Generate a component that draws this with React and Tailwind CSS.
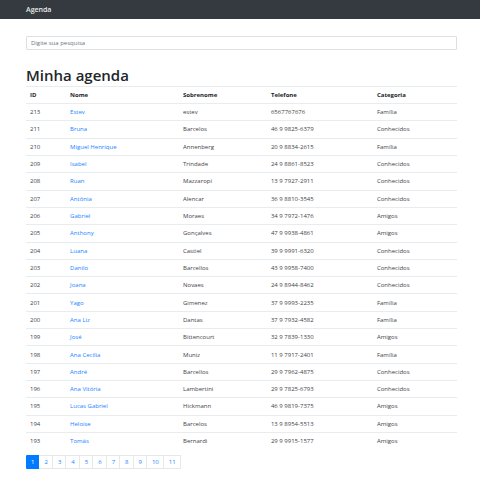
const contacts = [
  [213, "Estev", "estev", "6567767676", "Família"],
  [211, "Bruna", "Barcelos", "46 9 9825-6379", "Conhecidos"],
  [210, "Miguel Henrique", "Annenberg", "20 9 8834-2615", "Família"],
  [209, "Isabel", "Trindade", "24 9 8861-8523", "Conhecidos"],
  [208, "Ruan", "Mazzaropi", "13 9 7927-2911", "Conhecidos"],
  [207, "Antônia", "Alencar", "36 9 8810-3545", "Conhecidos"],
  [206, "Gabriel", "Moraes", "34 9 7972-1476", "Amigos"],
  [205, "Anthony", "Gonçalves", "47 9 9938-4861", "Amigos"],
  [204, "Luana", "Castiel", "39 9 9991-6320", "Conhecidos"],
  [203, "Danilo", "Barcellos", "43 9 9958-7400", "Conhecidos"],
  [202, "Joana", "Novaes", "24 9 8944-8462", "Conhecidos"],
  [201, "Yago", "Gimenez", "37 9 9993-2235", "Família"],
  [200, "Ana Liz", "Dantas", "37 9 7932-4582", "Família"],
  [199, "José", "Bittencourt", "32 9 7839-1330", "Amigos"],
  [198, "Ana Cecília", "Muniz", "11 9 7917-2401", "Família"],
  [197, "André", "Barcellos", "29 9 7962-4875", "Conhecidos"],
  [196, "Ana Vitória", "Lambertini", "29 9 7825-6793", "Conhecidos"],
  [195, "Lucas Gabriel", "Hickmann", "46 9 9819-7375", "Amigos"],
  [194, "Heloise", "Barcelos", "13 9 8954-5513", "Amigos"],
  [193, "Tomás", "Bernardi", "29 9 9915-1577", "Amigos"],
];

const columns = [
  ["ID", "w-[9.3%]"],
  ["Nome", "w-[26.2%]"],
  ["Sobrenome", "w-[20.4%]"],
  ["Telefone", "w-[24.6%]"],
  ["Categoria", "w-[19.5%]"],
];

const pages = [1, 2, 3, 4, 5, 6, 7, 8, 9, 10, 11];

function ContactRow({ contact }) {
  const [id, name, surname, phone, category] = contact;
  return (
    <tr className="border-t border-[#e9ecef]">
      <td className="px-1">{id}</td>
      <td className="px-1">
        <a href="#contato" className="text-[#1a84ff]">{name}</a>
      </td>
      <td className="px-1">{surname}</td>
      <td className="px-1">{phone}</td>
      <td className="px-1">{category}</td>
    </tr>
  );
}

export default function App() {
  return (
    <div className="min-h-screen bg-white font-['Open_Sans','Noto_Sans',sans-serif] text-[6px] leading-[8px] text-[#212529]">
      <nav className="flex h-[19px] items-center bg-[#343a40] pr-[23px] pl-[26px]">
        <a href="#inicio" className="text-[7px] leading-[10px] font-semibold text-[#e9eaeb]">Agenda</a>
      </nav>
      <main className="pt-[17px] pr-[23px] pb-3 pl-[26px]">
        <input
          type="search"
          aria-label="Digite sua pesquisa"
          placeholder="Digite sua pesquisa"
          className="block h-[14px] w-full rounded-[1px] border border-[#dce0e5] px-1 outline-none placeholder:text-[#6c757d]"
        />
        <h1 className="mt-4 text-[15px] leading-[18px] font-semibold">Minha agenda</h1>
        <table className="mt-0.5 h-[363px] w-full table-fixed border-collapse text-left">
          <thead>
            <tr className="h-[17px] border-y border-[#e9ecef]">
              {columns.map(([label, width]) => (
                <th key={label} scope="col" className={"px-1 font-bold " + width}>{label}</th>
              ))}
            </tr>
          </thead>
          <tbody className="text-[#3f4347]">
            {contacts.map((contact) => (
              <ContactRow key={contact[0]} contact={contact} />
            ))}
          </tbody>
        </table>
        <nav aria-label="Paginação" className="mt-[6px] flex">
          {pages.map((page) => (
            <a
              key={page}
              href="#pagina"
              aria-current={page === 1 ? "page" : undefined}
              className={
                page === 1
                  ? "flex h-[14px] items-center rounded-l-[1px] bg-[#007bff] px-[5px] text-white"
                  : "flex h-[14px] items-center border-y border-r border-[#e6e9ec] pr-[4px] pl-[5px] text-[#1a84ff] last:rounded-r-[1px]"
              }
            >
              {page}
            </a>
          ))}
        </nav>
      </main>
    </div>
  );
}
